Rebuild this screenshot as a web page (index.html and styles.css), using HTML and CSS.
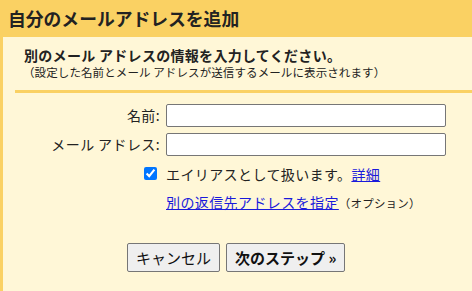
FILE: index.html
```html
<!DOCTYPE html>
<html lang="ja">
<head>
<meta charset="utf-8">
<link rel="stylesheet" href="styles.css">
</head>
<body>
<div class="header">自分のメールアドレスを追加</div>
<div class="panel">
  <div class="intro">
    <div class="title">別のメール アドレスの情報を入力してください。</div>
    <div class="note">（設定した名前とメール アドレスが送信するメールに表示されます）</div>
  </div>
  <div class="sep"></div>
  <div class="form">
    <label class="lbl">名前:</label>
    <input class="field" type="text">
    <label class="lbl">メール アドレス:</label>
    <input class="field" type="text">
    <div class="lbl chk"><input type="checkbox" checked></div>
    <div class="txt">エイリアスとして扱います。<a href="#">詳細</a></div>
    <div></div>
    <div class="txt"><a href="#">別の返信先アドレスを指定</a><span class="opt">（オプション）</span></div>
  </div>
  <div class="buttons">
    <button class="btn">キャンセル</button>
    <button class="btn primary">次のステップ »</button>
  </div>
</div>
</body>
</html>
```
FILE: styles.css
```css
html, body {
  margin: 0;
  padding: 0;
  background: #fff7d7;
  font-family: "Noto Sans CJK JP", "Noto Sans", sans-serif;
  color: #222;
}
.header {
  background: #fad163;
  height: 37px;
  line-height: 37px;
  padding-left: 8px;
  font-size: 17.8px;
  font-weight: bold;
  color: #222;
}
.panel {
  border-left: 3px solid #fad163;
  min-height: 254px;
  box-sizing: border-box;
}
.intro {
  padding: 9px 0 0 21px;
}
.title {
  font-size: 14px;
  font-weight: bold;
  line-height: 19px;
  letter-spacing: 0.3px;
}
.note {
  font-size: 11.5px;
  line-height: 15px;
  margin-left: -1px;
  letter-spacing: 0.1px;
}
.sep {
  margin: 10px 0 0 12px;
  height: 3px;
  background: #fad163;
}
.form {
  display: grid;
  grid-template-columns: 157px 280px;
  column-gap: 6px;
  row-gap: 6px;
  margin-top: 11px;
  font-size: 14px;
  align-items: center;
  letter-spacing: 0.4px;
}
.lbl {
  text-align: right;
  font-size: 14px;
  line-height: 23px;
}
.field {
  height: 23px;
  box-sizing: border-box;
  border: 1px solid #767676;
  border-radius: 2px;
  background: #fff;
  margin: 0;
  padding: 1px 2px;
  width: 280px;
}
.chk {
  display: flex;
  justify-content: flex-end;
  line-height: 0;
}
.chk input {
  margin: 0 3px 0 0;
  width: 13px;
  height: 13px;
}
.txt {
  line-height: 20px;
  margin-top: 2px;
}
.txt a {
  color: #1a1adb;
  text-decoration: underline;
}
.opt {
  font-size: 11.5px;
  letter-spacing: 0.2px;
}
.buttons {
  display: flex;
  gap: 6px;
  margin: 30px 0 0 124px;
}
.btn {
  font-family: inherit;
  font-size: 15px;
  height: 29px;
  padding: 0 8px;
  background: #efefef;
  border: 1px solid #767676;
  border-radius: 2px;
  color: #111;
}
.btn.primary {
  font-weight: bold;
}
```
